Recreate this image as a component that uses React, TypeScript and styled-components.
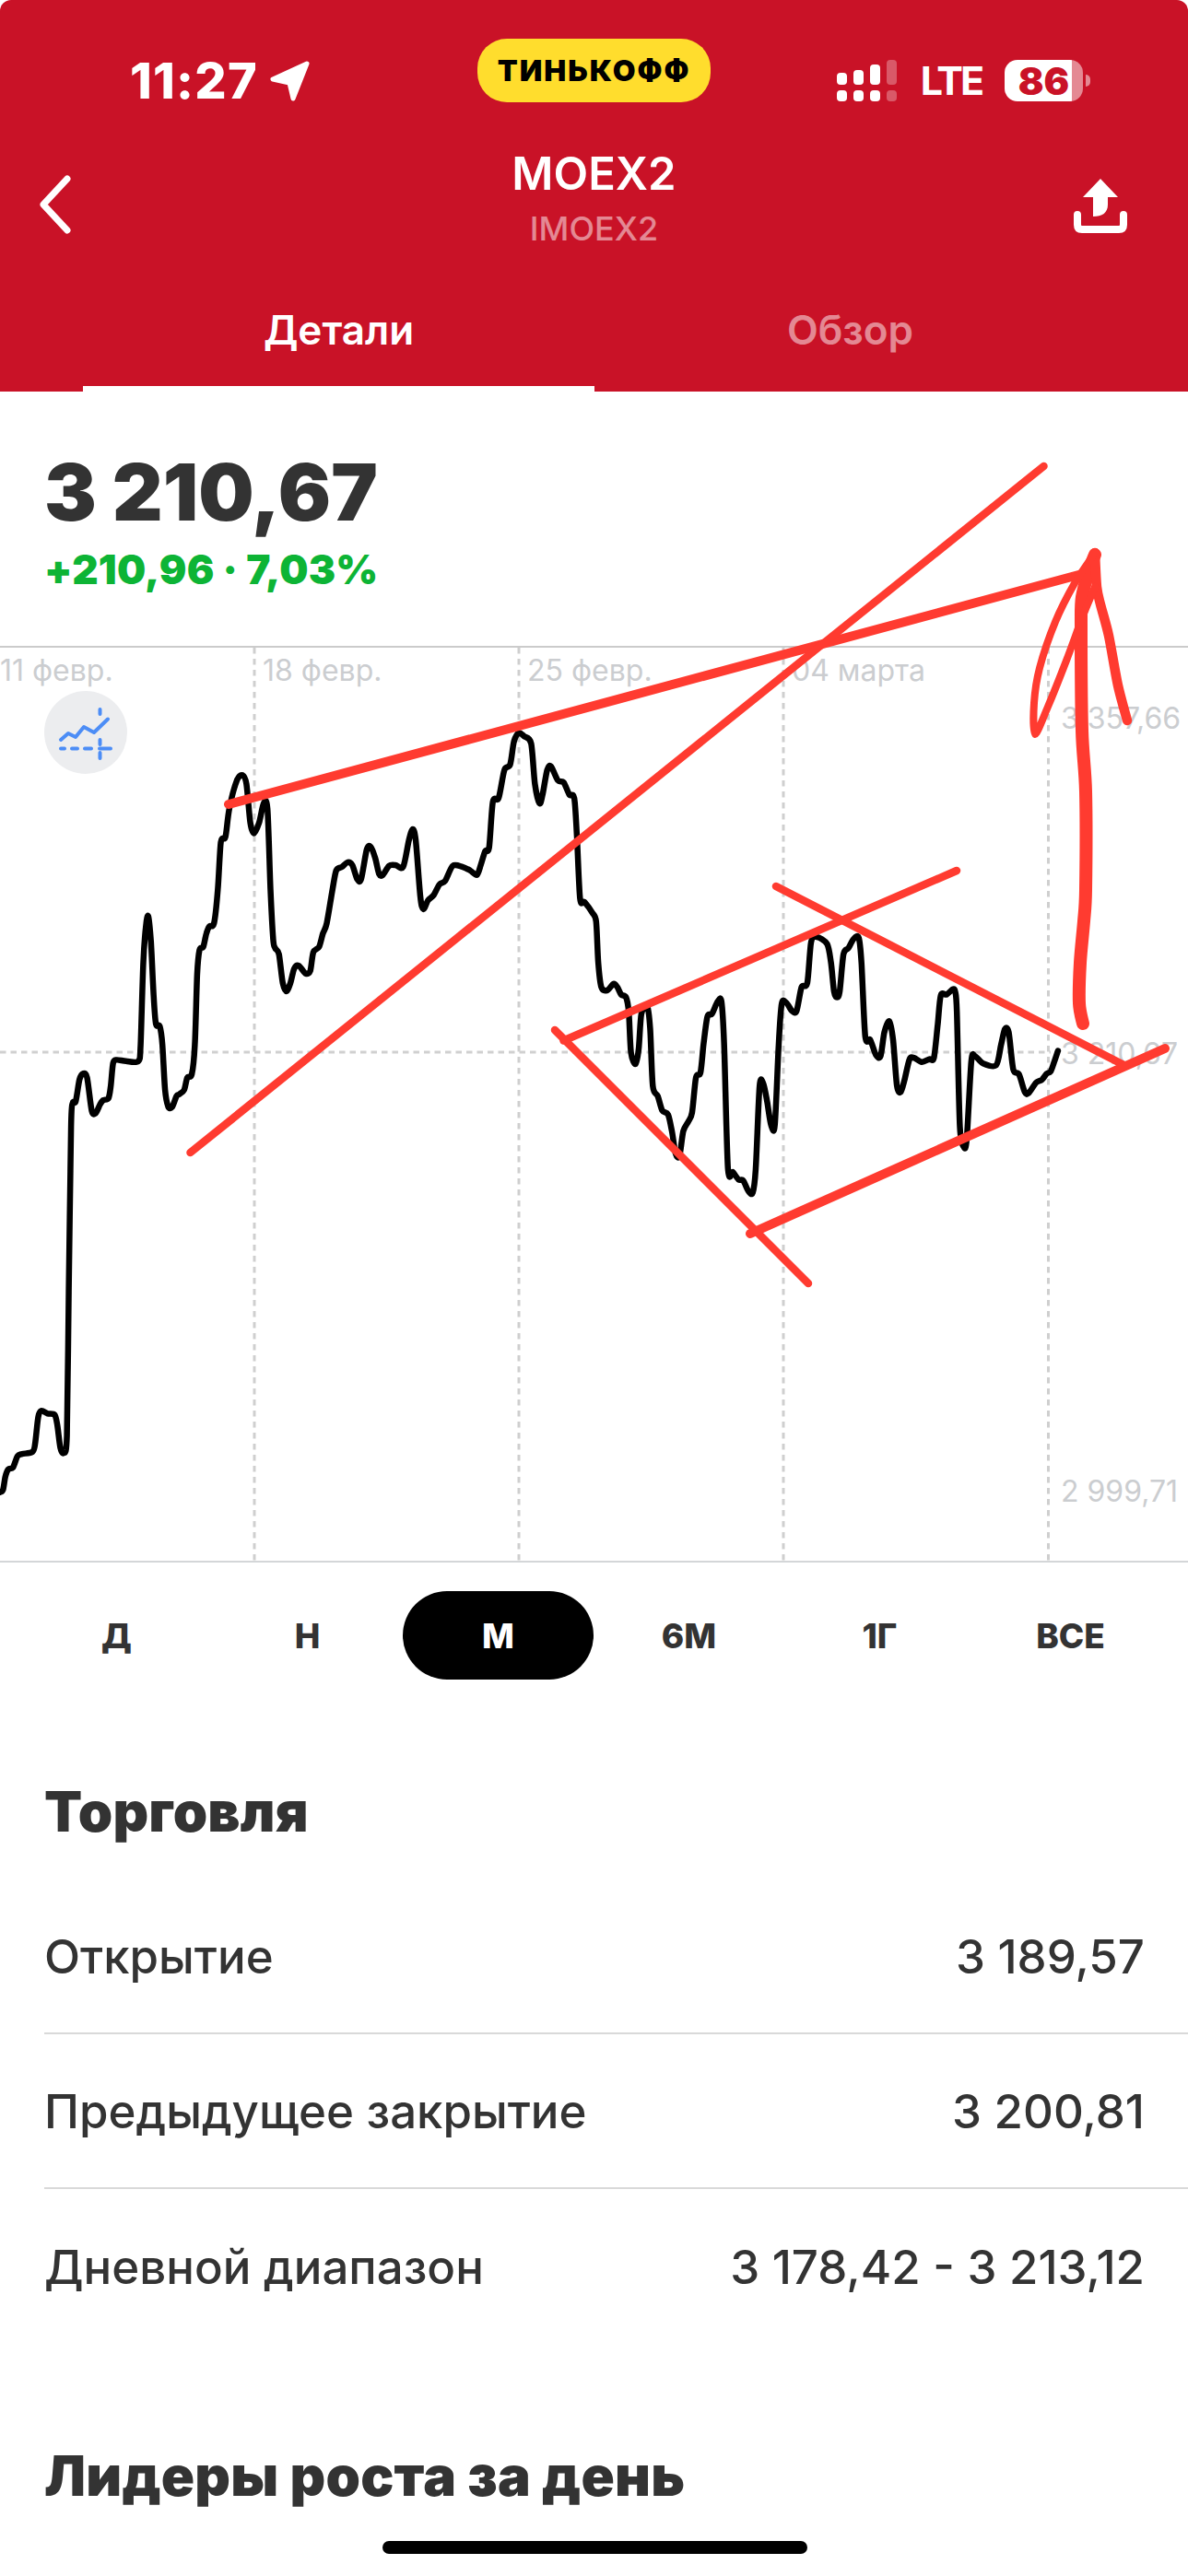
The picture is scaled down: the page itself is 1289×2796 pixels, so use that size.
import React from "react";
import styled, { createGlobalStyle } from "styled-components";

const GlobalStyle = createGlobalStyle`
  html, body {
    margin: 0;
    padding: 0;
    background: #fff;
  }
  body {
    font-family: "Inter", "Noto Sans", sans-serif;
    color: #333;
  }
`;

const Page = styled.div`
  position: relative;
  width: 1289px;
  height: 2796px;
  overflow: hidden;
  background: #fff;
`;

const Header = styled.header`
  height: 425px;
  display: flex;
  flex-direction: column;
  background: #c91227;
  border-radius: 12px 12px 0 0;
  color: #fff;
`;

const StatusBar = styled.div`
  display: grid;
  grid-template-columns: 1fr 253px 1fr;
  padding-top: 42px;
`;

const StatusLeft = styled.div`
  display: flex;
  align-items: center;
  gap: 12px;
  height: 47px;
  padding: 22px 0 0 141px;
`;

const StatusRight = styled.div`
  display: flex;
  align-items: center;
  justify-content: flex-end;
  gap: 25px;
  height: 47px;
  padding: 22px 114px 0 0;
`;

const Time = styled.span`
  font-size: 54px;
  font-weight: 800;
  letter-spacing: 1.2px;
  line-height: 47px;
`;

const CarrierPill = styled.div`
  display: flex;
  align-items: center;
  justify-content: center;
  height: 69px;
  border-radius: 32px;
  background: #ffdd2d;
  color: #000;
  font-size: 32px;
  font-weight: 900;
  letter-spacing: 2px;
`;

const NetworkLabel = styled.span`
  font-size: 43px;
  font-weight: 700;
  letter-spacing: -3px;
  line-height: 47px;
`;

const Battery = styled.div`
  position: relative;
  display: flex;
  align-items: center;
  justify-content: center;
  width: 85px;
  height: 45px;
  border-radius: 14px;
  background: linear-gradient(to right, #fff 73px, rgba(255, 255, 255, 0.5) 73px);
  color: #c91227;
  font-size: 41px;
  font-weight: 900;

  &::after {
    content: "";
    position: absolute;
    left: 88px;
    top: 16px;
    width: 5px;
    height: 13px;
    border-radius: 0 6px 6px 0;
    background: rgba(255, 255, 255, 0.5);
  }
`;

const Nav = styled.div`
  display: grid;
  grid-template-columns: 1fr auto 1fr;
  margin-top: 48px;
  padding: 0 43px;
`;

const BackIcon = styled.svg`
  width: 36px;
  height: 64px;
  margin-top: 31px;
`;

const ShareIcon = styled.svg`
  justify-self: end;
  width: 60px;
  height: 60px;
  margin: 35px 22px 0 0;
`;

const TitleBlock = styled.div`
  text-align: center;
`;

const Title = styled.div`
  font-size: 49px;
  font-weight: 600;
  line-height: 60px;
`;

const Subtitle = styled.div`
  margin-top: 7px;
  color: rgba(255, 255, 255, 0.5);
  font-size: 36px;
  font-weight: 500;
  line-height: 44px;
`;

const Tabs = styled.div`
  display: grid;
  grid-template-columns: 1fr 1fr;
  margin-top: auto;
  padding: 0 89px 0 90px;
`;

const Tab = styled.div<{ $active?: boolean }>`
  padding-bottom: 36px;
  border-bottom: 6px solid ${({ $active }) => ($active ? "#fff" : "transparent")};
  color: ${({ $active }) => ($active ? "#fff" : "rgba(255, 255, 255, 0.5)")};
  font-size: 44px;
  font-weight: 600;
  line-height: 50px;
  text-align: center;
`;

const Quote = styled.section`
  padding: 60px 48px 58px;
`;

const Price = styled.div`
  font-size: 85px;
  font-weight: 900;
  line-height: 100px;
  color: #333;
`;

const Change = styled.div`
  margin-top: 8px;
  color: #0db435;
  font-size: 44px;
  font-weight: 900;
  letter-spacing: 0.2px;
  line-height: 50px;
`;

const Chart = styled.div`
  position: relative;
  box-sizing: border-box;
  height: 995px;
  border-top: 2px solid #cbcbcb;
  border-bottom: 2px solid #d4d6d8;
`;

const ChartSvg = styled.svg`
  position: absolute;
  left: 0;
  top: -2px;
  width: 1289px;
  height: 995px;
`;

const AxisLabel = styled.span<{ $x: number; $y: number }>`
  position: absolute;
  left: ${({ $x }) => $x}px;
  top: ${({ $y }) => $y}px;
  color: #cbcdd0;
  font-size: 32px;
  line-height: 36px;
  white-space: nowrap;
`;

const IndicatorButton = styled.div`
  position: absolute;
  left: 48px;
  top: 47px;
  width: 90px;
  height: 90px;
  display: flex;
  align-items: center;
  justify-content: center;
  border-radius: 50%;
  background: #ecedef;
`;

const RangeBar = styled.div`
  display: grid;
  grid-template-columns: repeat(6, 207px);
  height: 96px;
  margin-top: 31px;
  padding-left: 23px;
`;

const RangeItem = styled.div<{ $active?: boolean }>`
  display: flex;
  align-items: center;
  justify-content: center;
  border-radius: 48px;
  background: ${({ $active }) => ($active ? "#000" : "transparent")};
  color: ${({ $active }) => ($active ? "#fff" : "#333")};
  font-size: 37px;
  font-weight: 800;
`;

const SectionTitle = styled.h2<{ $gap: number }>`
  margin: ${({ $gap }) => $gap}px 0 0 48px;
  color: #333;
  font-size: 60px;
  font-weight: 900;
  letter-spacing: 0.2px;
  line-height: 70px;
`;

const Rows = styled.div`
  margin: 39px 0 0 48px;
`;

const Row = styled.div`
  box-sizing: border-box;
  height: 168px;
  display: flex;
  align-items: center;
  justify-content: space-between;
  padding-right: 47px;
  border-bottom: 2px solid #d9d9d9;
  color: #333;
  font-size: 51px;
  font-weight: 500;

  &:last-child {
    border-bottom: none;
  }
`;

const Overlay = styled.svg`
  position: absolute;
  left: 0;
  top: 0;
  width: 1289px;
  height: 2796px;
  pointer-events: none;
`;

const HomeBar = styled.div`
  position: absolute;
  left: 415px;
  bottom: 24px;
  width: 461px;
  height: 14px;
  border-radius: 7px;
  background: #000;
`;

type Pt = [number, number];

// points were read off zoomed crops, so each run is mapped back to page coordinates
const crop = (pts: Pt[], ox: number, oy: number, sx: number, sy: number): Pt[] =>
  pts.map(([x, y]) => [ox + x / sx, oy + y / sy]);

const smooth = (pts: Pt[]) => {
  let d = `M${pts[0][0].toFixed(1)} ${pts[0][1].toFixed(1)}`;
  for (let i = 0; i < pts.length - 1; i++) {
    const p0 = pts[Math.max(i - 1, 0)];
    const p1 = pts[i];
    const p2 = pts[i + 1];
    const p3 = pts[Math.min(i + 2, pts.length - 1)];
    const c1x = p1[0] + (p2[0] - p0[0]) / 7;
    const c1y = p1[1] + (p2[1] - p0[1]) / 7;
    const c2x = p2[0] - (p3[0] - p1[0]) / 7;
    const c2y = p2[1] - (p3[1] - p1[1]) / 7;
    d += `C${c1x.toFixed(1)} ${c1y.toFixed(1)} ${c2x.toFixed(1)} ${c2y.toFixed(1)} ${p2[0].toFixed(1)} ${p2[1].toFixed(1)}`;
  }
  return d;
};

const priceLine: Pt[] = [
  ...crop(
    [
      [0, 1388], [8, 1382], [14, 1350], [22, 1332], [34, 1328], [46, 1300], [58, 1295], [85, 1290],
      [92, 1270], [100, 1205], [108, 1190], [125, 1197], [143, 1200], [150, 1225], [158, 1280],
      [167, 1292], [175, 1250], [180, 900], [186, 500], [190, 442], [198, 438], [208, 385],
      [218, 370], [228, 380], [240, 460], [250, 467], [262, 445], [270, 435], [284, 430], [290, 400],
      [296, 345], [305, 337], [330, 340], [362, 340], [368, 300], [375, 100], [382, 10], [388, -12],
      [395, 50], [402, 180], [408, 250], [418, 255], [425, 300], [432, 410], [440, 450], [450, 452],
      [462, 425], [470, 420], [482, 410], [490, 380], [502, 372], [510, 300], [516, 130], [522, 70],
      [532, 62], [540, 30], [548, 12], [560, 5],
    ],
    0, 1000, 2.412, 2.24
  ),
  ...crop(
    [
      [570, 1400], [578, 1265], [590, 1250], [600, 1170], [620, 1090], [635, 1075], [645, 1100],
      [655, 1210], [665, 1240], [678, 1210], [690, 1155], [700, 1170], [708, 1400], [715, 1540],
    ],
    0, 430, 2.412, 2.613
  ),
  ...crop(
    [
      [720, 65], [730, 80], [740, 150], [750, 170], [760, 150], [770, 115], [782, 108], [800, 127],
      [812, 120], [820, 75], [835, 62], [845, 30], [855, 5],
    ],
    0, 1000, 2.412, 2.24
  ),
  ...crop(
    [
      [870, 1400], [880, 1345], [895, 1335], [910, 1322], [922, 1330], [935, 1370], [945, 1370],
      [960, 1285], [970, 1278], [982, 1310], [992, 1355], [1002, 1358], [1018, 1332], [1035, 1330],
      [1055, 1335], [1070, 1260], [1080, 1228], [1088, 1260], [1100, 1420], [1108, 1455], [1120, 1430],
      [1135, 1415], [1150, 1385], [1165, 1375], [1185, 1332], [1210, 1335], [1230, 1345], [1248, 1358],
      [1258, 1330], [1270, 1290], [1280, 1280], [1290, 1150], [1305, 1140], [1320, 1060], [1335, 1045],
      [1345, 980], [1358, 955], [1372, 965], [1390, 985], [1400, 1100], [1412, 1155], [1420, 1130],
      [1432, 1060], [1442, 1050], [1460, 1090], [1475, 1095], [1490, 1130], [1503, 1140], [1510, 1250],
      [1518, 1425], [1530, 1435], [1550, 1465], [1560, 1490],
    ],
    0, 430, 2.412, 2.613
  ),
  ...crop(
    [
      [22, 100], [30, 160], [45, 168], [62, 152], [72, 160], [82, 178], [95, 185], [102, 220], [108, 320],
      [120, 347], [128, 310], [135, 225], [150, 205], [158, 260], [165, 400], [178, 425], [190, 460],
      [205, 470], [215, 510], [225, 565], [235, 570], [245, 510], [258, 487], [268, 465], [278, 380],
      [290, 368], [298, 300], [308, 232], [320, 225], [335, 195], [345, 195], [352, 300], [362, 600],
      [375, 610], [390, 628], [402, 630], [415, 655], [427, 660], [435, 600], [445, 400], [455, 395],
      [465, 440], [475, 495], [485, 495], [495, 300], [503, 200], [515, 198], [530, 218], [542, 218],
      [555, 160], [570, 150], [580, 50], [595, 38], [622, 55], [632, 100], [640, 170], [648, 185],
      [655, 170], [665, 80], [678, 65], [692, 42], [705, 40], [712, 100], [722, 280], [735, 288],
      [750, 325], [762, 328], [772, 270], [785, 243], [795, 290], [805, 400], [815, 415], [825, 385],
      [838, 335], [850, 332], [870, 342], [890, 335], [902, 332], [912, 250], [920, 180], [935, 178],
      [952, 165], [958, 172], [962, 220], [970, 500], [980, 548], [988, 530], [1000, 340], [1010, 328], [1030, 345],
      [1065, 350], [1078, 300], [1088, 262], [1098, 270], [1110, 360], [1125, 372], [1140, 415],
      [1150, 418], [1170, 392], [1185, 385], [1198, 370], [1208, 365], [1218, 340], [1227, 315],
    ],
    640, 1000, 2.416, 2.24
  ),
];

const arrowShaft: Pt[] = [
  [1175, 1111], [1171, 1089], [1172, 1045], [1176, 1000], [1178, 966], [1178, 859],
  [1174, 793], [1173, 679], [1174, 648], [1182, 618], [1188, 602],
];

const arrowRight: Pt[] = [
  [1188, 600], [1190, 637], [1194, 656], [1203, 690], [1213, 744], [1223, 782],
];

const arrowLeft: Pt[] = [
  [1188, 600], [1166, 633], [1145, 675], [1128, 725], [1122, 763], [1123, 797],
  [1137, 767], [1157, 717], [1174, 671], [1188, 637],
];

const verticals = [276, 563, 850, 1137.5];

const ranges = ["Д", "Н", "М", "6М", "1Г", "ВСЕ"];

const tradeRows = [
  ["Открытие", "3 189,57"],
  ["Предыдущее закрытие", "3 200,81"],
  ["Дневной диапазон", "3 178,42 - 3 213,12"],
];

const App = () => {
  return (
    <Page>
      <GlobalStyle />
      <Header>
        <StatusBar>
          <StatusLeft>
            <Time>11:27</Time>
            <svg width="46" height="46" viewBox="0 0 46 46">
              <path d="M41 4 4 21 22 25 26 42Z" fill="#fff" stroke="#fff" strokeWidth="5" strokeLinejoin="round" />
            </svg>
          </StatusLeft>
          <CarrierPill>ТИНЬКОФФ</CarrierPill>
          <StatusRight>
            <svg width="66" height="46" viewBox="0 0 66 46" fill="#fff">
              <rect x="0" y="33" width="11" height="12" rx="4" />
              <rect x="18" y="33" width="11" height="12" rx="4" />
              <rect x="36" y="33" width="11" height="12" rx="4" />
              <rect x="54" y="33" width="11" height="12" rx="4" opacity="0.3" />
              <rect x="0" y="14" width="11" height="13" rx="4" />
              <rect x="18" y="11" width="11" height="16" rx="4" />
              <rect x="36" y="5" width="11" height="22" rx="4" />
              <rect x="54" y="0" width="11" height="27" rx="4" opacity="0.3" />
            </svg>
            <NetworkLabel>LTE</NetworkLabel>
            <Battery>86</Battery>
          </StatusRight>
        </StatusBar>
        <Nav>
          <BackIcon viewBox="0 0 36 64" fill="none" stroke="#fff" strokeWidth="7" strokeLinecap="round" strokeLinejoin="round">
            <path d="M30 4 4 32 30 60" />
          </BackIcon>
          <TitleBlock>
            <Title>MOEX2</Title>
            <Subtitle>IMOEX2</Subtitle>
          </TitleBlock>
          <ShareIcon viewBox="0 0 60 60" fill="#fff">
            <path d="M30 0 49 20H38V28C38 37 32 41 22 41V20H11Z" />
            <path d="M5 39V50Q5 55 10 55H50Q55 55 55 50V39" fill="none" stroke="#fff" strokeWidth="8" strokeLinecap="round" />
          </ShareIcon>
        </Nav>
        <Tabs>
          <Tab $active>Детали</Tab>
          <Tab>Обзор</Tab>
        </Tabs>
      </Header>

      <Quote>
        <Price>3 210,67</Price>
        <Change>+210,96 · 7,03%</Change>
      </Quote>

      <Chart>
        <ChartSvg viewBox="0 701 1289 995" fill="none">
          <line x1="0" y1="1142" x2="1140" y2="1142" stroke="#d0d0d0" strokeWidth="3" strokeDasharray="6.5 5" />
          {verticals.map((x) => (
            <line key={x} x1={x} y1="703" x2={x} y2="1694" stroke="#cfcfcf" strokeWidth="3" strokeDasharray="6.5 5.5" />
          ))}
          <path d={smooth(priceLine)} stroke="#000" strokeWidth="6.5" strokeLinejoin="round" strokeLinecap="round" />
        </ChartSvg>
        <AxisLabel $x={0} $y={7}>11 февр.</AxisLabel>
        <AxisLabel $x={285} $y={7}>18 февр.</AxisLabel>
        <AxisLabel $x={572} $y={7}>25 февр.</AxisLabel>
        <AxisLabel $x={859} $y={7}>04 марта</AxisLabel>
        <AxisLabel $x={1151} $y={59}>3 357,66</AxisLabel>
        <AxisLabel $x={1151} $y={423}>3 210,67</AxisLabel>
        <AxisLabel $x={1151} $y={898}>2 999,71</AxisLabel>
        <IndicatorButton>
          <svg width="60" height="60" viewBox="0 0 60 60" fill="none" stroke="#4c8df6" strokeWidth="4" strokeLinecap="round" strokeLinejoin="round">
            <path d="M3 38 11 31 19 35 28 24 39 30 54 15.500" />
            <path d="M3 47.500H7M15 47.500H21M29 47.500H36M45 47.500H57" />
            <path d="M45.500 5V10M45.500 38V43M45.500 52V58" />
          </svg>
        </IndicatorButton>
      </Chart>

      <RangeBar>
        {ranges.map((r) => (
          <RangeItem key={r} $active={r === "М"}>
            {r}
          </RangeItem>
        ))}
      </RangeBar>

      <SectionTitle $gap={108}>Торговля</SectionTitle>
      <Rows>
        {tradeRows.map(([label, value]) => (
          <Row key={label}>
            <span>{label}</span>
            <span>{value}</span>
          </Row>
        ))}
      </Rows>
      <SectionTitle $gap={108}>Лидеры роста за день</SectionTitle>

      {/* hand drawn marks on top of the screenshot */}
      <Overlay viewBox="0 0 1289 2796" fill="none" stroke="#ff3b30" strokeLinecap="round" strokeLinejoin="round">
        <line x1="248" y1="873" x2="1174" y2="623" strokeWidth="10" />
        <line x1="206.500" y1="1251" x2="1132.500" y2="506" strokeWidth="8.500" />
        <line x1="611.500" y1="1129.500" x2="1038" y2="945" strokeWidth="8.500" />
        <line x1="602" y1="1118" x2="877" y2="1393" strokeWidth="8.500" />
        <line x1="842" y1="962" x2="1219.500" y2="1156" strokeWidth="8.500" />
        <line x1="814" y1="1339" x2="1264" y2="1138" strokeWidth="10" />
        <path d={smooth(arrowShaft)} strokeWidth="14" />
        <path d={smooth(arrowRight)} strokeWidth="10.500" />
        <path d={smooth(arrowLeft)} strokeWidth="8" />
      </Overlay>

      <HomeBar />
    </Page>
  );
};

export default App;
